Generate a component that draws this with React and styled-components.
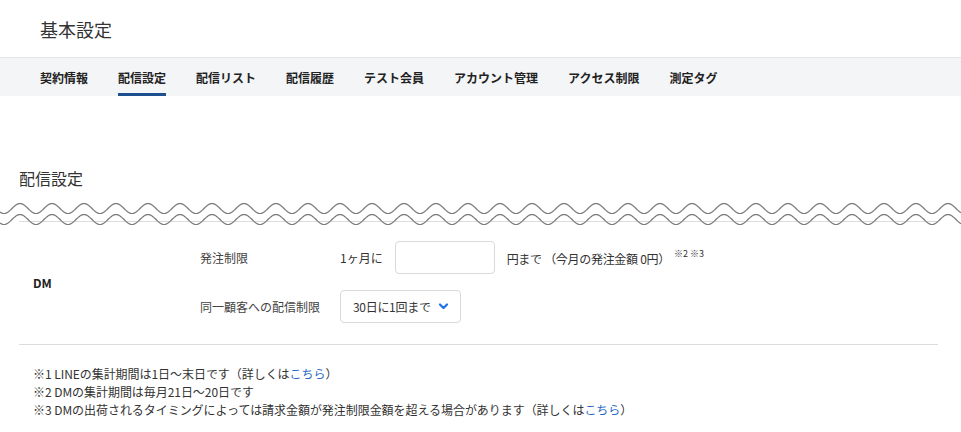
import React from "react";
import styled, { createGlobalStyle } from "styled-components";

const GlobalStyle = createGlobalStyle`
  body {
    margin: 0;
    background: #fff;
    color: #333;
    font-family: "Noto Sans CJK JP", "Noto Sans", sans-serif;
  }
`;

const Header = styled.header`
  height: 57px;
  display: flex;
  align-items: center;
  padding-left: 40px;
`;

const PageTitle = styled.h1`
  margin: 0;
  font-size: 18px;
  font-weight: 400;
  color: #333;
`;

const TabBar = styled.nav`
  display: flex;
  gap: 30px;
  height: 38px;
  padding-left: 40px;
  background: #f4f5f7;
  border-top: 1px solid #e2e3e5;
`;

const Tab = styled.a`
  display: flex;
  align-items: center;
  padding-top: 3px;
  font-size: 12px;
  font-weight: 700;
  color: #222;
  text-decoration: none;
  border-bottom: 3px solid ${(p) => (p.$active ? "#1e4f8f" : "transparent")};
  cursor: pointer;
`;

const Section = styled.section`
  margin-top: 70px;
`;

const SectionTitle = styled.h2`
  margin: 0 0 9px 19px;
  font-size: 16px;
  line-height: 24px;
  font-weight: 400;
  color: #333;
`;

const Break = styled.div`
  position: relative;
  height: 28px;
`;

const BreakRule = styled.div`
  margin: 0 23px 0 19px;
  padding-top: 22px;
  border-bottom: 1px solid #dcdcdc;
`;

const WaveSvg = styled.svg`
  position: absolute;
  inset: 0;
  width: 100%;
  height: 28px;
`;

const Form = styled.div`
  display: grid;
  grid-template-columns: 167px 140px 1fr;
  grid-template-rows: 33px 33px;
  row-gap: 16px;
  align-items: center;
  margin: 0 23px 0 19px;
  padding: 14px 0 21px 14px;
  border-bottom: 1px solid #dcdcdc;
`;

const GroupName = styled.div`
  grid-row: 1 / span 2;
  font-size: 12px;
  font-weight: 700;
  color: #222;
`;

const Label = styled.div`
  font-size: 12px;
  color: #444;
`;

const Control = styled.div`
  display: flex;
  align-items: center;
  gap: 12px;
  font-size: 12px;
  color: #333;
`;

const TextInput = styled.input`
  box-sizing: border-box;
  width: 100px;
  height: 33px;
  border: 1px solid #d9d9d9;
  border-radius: 4px;
  background: #fff;
  font: inherit;
  padding: 0 8px;
`;

const Note = styled.span`
  letter-spacing: -0.3px;
`;

const Sup = styled.sup`
  font-size: 9px;
  margin-left: 4px;
  letter-spacing: 0;
  position: relative;
  top: -2px;
`;

const Select = styled.div`
  box-sizing: border-box;
  width: 121px;
  height: 33px;
  display: flex;
  align-items: center;
  justify-content: space-between;
  padding: 0 12px;
  border: 1px solid #d9d9d9;
  border-radius: 4px;
  background: #fff;
  font-size: 12px;
  color: #333;
  letter-spacing: -0.3px;
`;

const Notes = styled.ul`
  list-style: none;
  margin: 0;
  padding: 20px 0 0 33px;
  font-size: 12px;
  line-height: 18px;
  letter-spacing: -0.05px;
  color: #333;
`;

const Link = styled.a`
  color: #2a6ac8;
  text-decoration: none;
`;

const tabs = [
  "契約情報",
  "配信設定",
  "配信リスト",
  "配信履歴",
  "テスト会員",
  "アカウント管理",
  "アクセス制限",
  "測定タグ",
];

function wavePath(cy, amp, period, phase, width) {
  let d = "";
  for (let x = 0; x <= width; x += 1) {
    const y = cy - amp * Math.cos((2 * Math.PI * (x - phase)) / period);
    d += (x === 0 ? "M" : "L") + x + "," + y.toFixed(2) + " ";
  }
  return d;
}

function Chevron() {
  return (
    <svg width="9" height="7" viewBox="0 0 9 7">
      <path d="M1 1.5 L4.5 5 L8 1.5" fill="none" stroke="#1a73e8" strokeWidth="2.2" strokeLinecap="round" strokeLinejoin="round" />
    </svg>
  );
}

export default function App() {
  return (
    <>
      <GlobalStyle />
      <Header>
        <PageTitle>基本設定</PageTitle>
      </Header>
      <TabBar>
        {tabs.map((t) => (
          <Tab key={t} $active={t === "配信設定"}>
            {t}
          </Tab>
        ))}
      </TabBar>

      <Section>
        <SectionTitle>配信設定</SectionTitle>
        <Break>
          <BreakRule />
          <WaveSvg viewBox="0 0 961 28" preserveAspectRatio="none">
            <path d={wavePath(9.5, 5, 32, 20, 961)} fill="none" stroke="#7a7a7a" strokeWidth="1.2" />
            <path d={wavePath(20.5, 5, 32, 20, 961)} fill="none" stroke="#7a7a7a" strokeWidth="1.2" />
          </WaveSvg>
        </Break>

        <Form>
          <GroupName>DM</GroupName>
          <Label>発注制限</Label>
          <Control>
            <span>1ヶ月に</span>
            <TextInput type="text" />
            <Note>
              円まで （今月の発注金額 0円）<Sup>※2 ※3</Sup>
            </Note>
          </Control>
          <Label>同一顧客への配信制限</Label>
          <Control>
            <Select>
              <span>30日に1回まで</span>
              <Chevron />
            </Select>
          </Control>
        </Form>

        <Notes>
          <li>
            ※1 LINEの集計期間は1日〜末日です（詳しくは<Link>こちら</Link>）
          </li>
          <li>※2 DMの集計期間は毎月21日〜20日です</li>
          <li>
            ※3 DMの出荷されるタイミングによっては請求金額が発注制限金額を超える場合があります（詳しくは<Link>こちら</Link>）
          </li>
        </Notes>
      </Section>
    </>
  );
}
